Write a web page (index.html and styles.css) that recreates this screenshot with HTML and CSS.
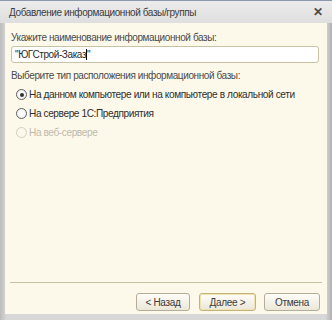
FILE: index.html
```html
<!DOCTYPE html>
<html lang="ru">
<head>
    <meta charset="UTF-8">
    <title>Добавление информационной базы/группы</title>
    <link rel="stylesheet" href="styles.css">
</head>
<body>
    <div class="window">
        <div class="titlebar">
            <span class="title">Добавление информационной базы/группы</span>
            <span class="close">&#x2715;</span>
        </div>
        <div class="panel">
            <label class="caption" for="name">Укажите наименование информационной базы:</label>
            <div class="input" id="name">"ЮГСтрой-Заказ<span class="caret"></span>"</div>

            <div class="caption group">Выберите тип расположения информационной базы:</div>
            <div class="radios">
                <div class="radio checked"><span class="dot"></span>На данном компьютере или на компьютере в локальной сети</div>
                <div class="radio"><span class="dot"></span>На сервере 1С:Предприятия</div>
                <div class="radio disabled"><span class="dot"></span>На веб-сервере</div>
            </div>

            <div class="footer">
                <div class="buttons">
                    <button class="btn back">&lt; Назад</button>
                    <button class="btn default">Далее &gt;</button>
                    <button class="btn cancel">Отмена</button>
                </div>
            </div>
        </div>
    </div>
</body>
</html>
```

FILE: styles.css
```css
body {
    margin: 0;
    background: #ffffff;
    font-family: "Liberation Sans", Arial, sans-serif;
    font-size: 10px;
    letter-spacing: -0.4px;
    color: #4a4a4a;
}
.window {
    width: 332px;
    height: 320px;
    box-sizing: border-box;
    border-top: 1px solid #8d99ab;
    background: linear-gradient(to right, #bcbcbc, #d8d8d8 2%, #d8d8d8 98%, #b0b0b0);
    padding: 0 5px 6px 5px;
    display: flex;
    flex-direction: column;
}
.titlebar {
    height: 22px;
    display: flex;
    align-items: center;
    justify-content: space-between;
    background: linear-gradient(#ececec, #dedede);
    margin: 0 -5px;
    padding: 0 9px;
}
.title {
    color: #3c3c3c;
}
.close {
    font-size: 12px;
    font-weight: bold;
    letter-spacing: 0;
    color: #4a4a4a;
}
.panel {
    flex: 1;
    background: #fdf9ea;
    display: flex;
    flex-direction: column;
    padding: 8px 8px 0 6px;
}
.caption {
    display: block;
    line-height: 13px;
}
.input {
    margin-top: 2px;
    height: 15px;
    line-height: 15px;
    border: 1px solid #c9c2a5;
    border-radius: 3px;
    background: #ffffff;
    padding: 0 3px;
    color: #2a2a2a;
}
.caret {
    display: inline-block;
    width: 1px;
    height: 11px;
    background: #000;
    vertical-align: -2px;
}
.group {
    margin-top: 6px;
}
.radios {
    display: flex;
    flex-direction: column;
    gap: 6px;
    margin-top: 6px;
    padding-left: 5px;
}
.radio {
    display: flex;
    align-items: center;
    gap: 2px;
    line-height: 13px;
    font-size: 10.1px;
    color: #2e2e2e;
}
.dot {
    width: 9px;
    height: 9px;
    border: 1px solid #5e5e5e;
    border-radius: 50%;
    background: radial-gradient(#ffffff, #eeeeee);
    display: flex;
    align-items: center;
    justify-content: center;
}
.checked .dot::after {
    content: "";
    width: 4px;
    height: 4px;
    border-radius: 50%;
    background: #333333;
}
.disabled {
    color: #bdb9ac;
}
.disabled .dot {
    border-color: #d2cec0;
    background: #fdf9ea;
}
.footer {
    border-top: 1px solid #c8c2a4;
    margin: auto -3px 0 -1px;
    padding: 10px 0 3px;
}
.buttons {
    display: flex;
    justify-content: flex-end;
    gap: 8px;
    padding-right: 2px;
}
.btn {
    font-family: "Liberation Sans", Arial, sans-serif;
    font-size: 10px;
    letter-spacing: -0.3px;
    color: #3a3a3a;
    height: 18px;
    width: 56px;
    padding: 0;
    border: 1px solid #b4ae98;
    border-radius: 3px;
    background: linear-gradient(#fefdf8, #ebe7d8);
}
.btn.back {
    width: 54px;
    margin-right: 1px;
}
.btn.default {
    width: 57px;
    border-color: #c4b27a;
    box-shadow: inset 0 0 0 1px #efe3b4;
}
```
